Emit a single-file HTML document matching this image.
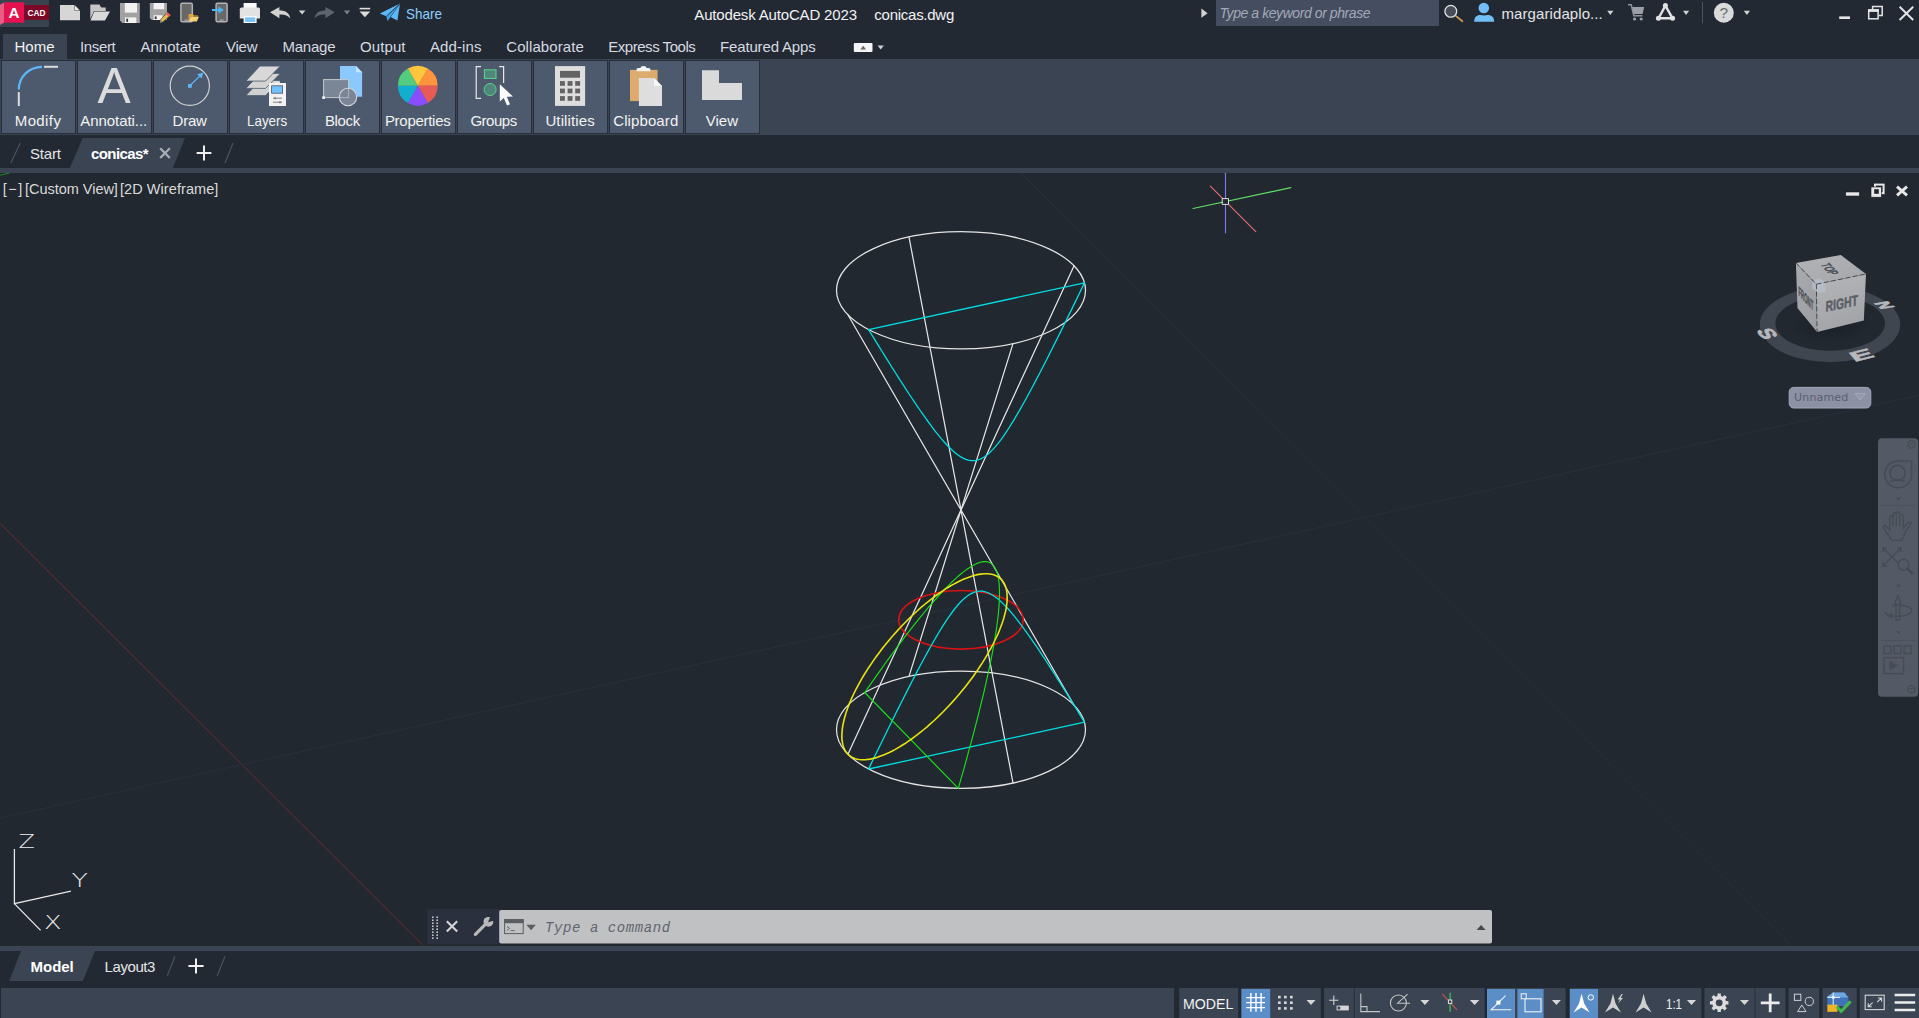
<!DOCTYPE html>
<html lang="en"><head><meta charset="utf-8"><title>Autodesk AutoCAD 2023 - conicas.dwg</title>
<style>
html,body{margin:0;padding:0;background:#222933;overflow:hidden}
body{width:1919px;height:1018px;position:relative;font-family:'Liberation Sans',sans-serif;}
.a{position:absolute}
.t{position:absolute;white-space:pre;line-height:1;}
svg{position:absolute;left:0;top:0;overflow:visible}
</style></head>
<body>
<div class="a" style="left:0px;top:0px;width:1919px;height:59px;background:#222933;"></div>
<div class="a" style="left:0px;top:0px;width:49px;height:27px;background:#394350;"></div>
<div class="a" style="left:3px;top:34px;width:64px;height:25px;background:#3b4453;"></div>
<div class="a" style="left:0px;top:59px;width:1919px;height:76px;background:#3b4453;"></div>
<div class="a" style="left:1px;top:60px;width:75px;height:74px;background:#272e3a;"></div>
<div class="a" style="left:2px;top:61px;width:73px;height:72px;background:#4d5a6e;"></div>
<div class="a" style="left:77px;top:60px;width:75px;height:74px;background:#272e3a;"></div>
<div class="a" style="left:78px;top:61px;width:73px;height:72px;background:#4d5a6e;"></div>
<div class="a" style="left:153px;top:60px;width:75px;height:74px;background:#272e3a;"></div>
<div class="a" style="left:154px;top:61px;width:73px;height:72px;background:#4d5a6e;"></div>
<div class="a" style="left:229px;top:60px;width:75px;height:74px;background:#272e3a;"></div>
<div class="a" style="left:230px;top:61px;width:73px;height:72px;background:#4d5a6e;"></div>
<div class="a" style="left:305px;top:60px;width:75px;height:74px;background:#272e3a;"></div>
<div class="a" style="left:306px;top:61px;width:73px;height:72px;background:#4d5a6e;"></div>
<div class="a" style="left:381px;top:60px;width:75px;height:74px;background:#272e3a;"></div>
<div class="a" style="left:382px;top:61px;width:73px;height:72px;background:#4d5a6e;"></div>
<div class="a" style="left:457px;top:60px;width:75px;height:74px;background:#272e3a;"></div>
<div class="a" style="left:458px;top:61px;width:73px;height:72px;background:#4d5a6e;"></div>
<div class="a" style="left:533px;top:60px;width:75px;height:74px;background:#272e3a;"></div>
<div class="a" style="left:534px;top:61px;width:73px;height:72px;background:#4d5a6e;"></div>
<div class="a" style="left:609px;top:60px;width:75px;height:74px;background:#272e3a;"></div>
<div class="a" style="left:610px;top:61px;width:73px;height:72px;background:#4d5a6e;"></div>
<div class="a" style="left:685px;top:60px;width:75px;height:74px;background:#272e3a;"></div>
<div class="a" style="left:686px;top:61px;width:73px;height:72px;background:#4d5a6e;"></div>
<div class="a" style="left:0px;top:135px;width:1919px;height:33px;background:#222933;"></div>
<div class="a" style="left:0px;top:168px;width:1919px;height:5px;background:#3b4453;"></div>
<div class="a" style="left:0px;top:173px;width:1919px;height:773px;background:#212830;"></div>
<div class="a" style="left:0px;top:946px;width:1919px;height:5px;background:#3b4453;"></div>
<div class="a" style="left:0px;top:951px;width:1919px;height:37px;background:#222933;"></div>
<div class="a" style="left:0px;top:988px;width:1919px;height:30px;background:#3b4453;"></div>
<div class="a" style="left:0px;top:988px;width:1px;height:30px;background:#222933;"></div>
<div class="a" style="left:1216px;top:0px;width:223px;height:26px;background:#454d60;"></div>
<svg width="1919" height="60" viewBox="0 0 1919 60">
<!-- app logo -->
<polygon points="0,4.8 4.2,2.4 4.2,22.6 0,25" fill="#ea5b86"/>
<rect x="4.2" y="2.3" width="20" height="20.4" fill="#e5124f"/>
<rect x="24.2" y="5" width="24.8" height="14.8" fill="#7c0826"/>
<text x="8.6" y="18" font-family="'Liberation Sans',sans-serif" font-weight="700" font-size="15.4" fill="#fff" textLength="11" lengthAdjust="spacingAndGlyphs">A</text>
<text x="27.5" y="15.8" font-family="'Liberation Sans',sans-serif" font-weight="700" font-size="9.2" fill="#fff" textLength="18" lengthAdjust="spacingAndGlyphs">CAD</text>
<!-- new -->
<path d="M60,5 H74.6 L80,10.4 V20.2 H60Z" fill="#d6d6d6"/>
<path d="M74.6,5 L80,10.4 H74.6Z" fill="#f6f6f6" stroke="#222933" stroke-width=".5"/>
<!-- open -->
<path d="M90.3,4.5 H99.4 L101.2,7.4 H105.7 V11 H94 L90.3,19Z" fill="#c6c6c6"/>
<path d="M94.3,11.6 H110 L105,20.6 H90.4Z" fill="#dadada"/>
<!-- save -->
<path d="M120,3 H139.8 V23 H122.4 L120,20.6Z" fill="#a2a2a2"/>
<rect x="124.8" y="3" width="12.2" height="9.6" fill="#f2f2f2"/>
<rect x="125" y="17.4" width="11.3" height="5.6" fill="#f2f2f2"/>
<rect x="126.3" y="18.7" width="1.8" height="3.2" fill="#30343c"/>
<!-- save as -->
<path d="M149.8,3 H167 V20 H151.8 L149.8,18Z" fill="#a2a2a2"/>
<rect x="153.6" y="3" width="10.6" height="6.2" fill="#f2f2f2"/>
<rect x="153.6" y="15.2" width="9" height="4.8" fill="#f2f2f2"/>
<rect x="154.8" y="16.4" width="1.8" height="2.6" fill="#30343c"/>
<path d="M167.5,12.2 L170.6,15.2 L163,22 L160,22.8 L160.6,19.6Z" fill="#e8b84e" stroke="#222933" stroke-width=".6"/>
<path d="M167.5,12.2 L170.6,15.2 L169,16.8 L165.8,13.8Z" fill="#ec5a62"/>
<path d="M160,22.8 L160.6,19.6 L163,22Z" fill="#8a8a8a"/>
<!-- mobile open -->
<rect x="180.9" y="3.2" width="11.4" height="18.6" rx="1.4" fill="#686868" stroke="#b2b2b2" stroke-width="1.5"/>
<rect x="184.6" y="19.6" width="4" height="1" fill="#b4b4b4"/>
<path d="M188.6,14 H193 L194,15.4 H198 V16.6 H190.6 L188.6,21.5Z" fill="#e0aa36"/>
<path d="M190.8,16.8 H199 L196.8,21.6 H188.6Z" fill="#f6d172"/>
<!-- mobile save -->
<rect x="216.1" y="3.2" width="11" height="18.6" rx="1.4" fill="#686868" stroke="#b2b2b2" stroke-width="1.5"/>
<rect x="219.6" y="19.6" width="4" height="1" fill="#b4b4b4"/>
<path d="M211.9,8.9 H218.4 V6.2 L223.9,10 L218.4,13.8 V11.1 H211.9Z" fill="#4db4f5"/>
<!-- print -->
<rect x="243.6" y="3" width="13" height="6" fill="#fafafa"/>
<path d="M241.5,7.6 H258.5 Q260,7.6 260,9.2 V18.6 H239.8 V9.2 Q239.8,7.6 241.5,7.6Z" fill="#e2e2e2"/>
<rect x="243.6" y="16.2" width="13" height="6.8" fill="#fafafa"/>
<rect x="245" y="17.4" width="10.2" height="4.6" fill="#79c4fa"/>
<!-- undo -->
<path d="M270,12.2 L279.4,7 V10.4 C285.6,10.4 289.8,13 290.2,18.6 C288,15.4 284.8,14.4 279.4,14.6 V18.2Z" fill="#d2d2d2"/>
<path d="M298.8,10.4 H305.4 L302.1,14.6Z" fill="#d2d2d2"/>
<!-- redo -->
<path d="M334.8,12.2 L325.4,7 V10.4 C319.2,10.4 315,13 314.6,18.6 C316.8,15.4 320,14.4 325.4,14.6 V18.2Z" fill="#5e646f"/>
<path d="M343.8,10.4 H350.2 L347,14.6Z" fill="#7b808a"/>
<!-- customize -->
<rect x="359.6" y="7.8" width="10.6" height="1.6" fill="#dcdcdc"/>
<path d="M359.6,11.4 H370.2 L364.9,17.2Z" fill="#dcdcdc"/>
<!-- share plane -->
<path d="M379.8,13.4 L400,3.6 L397.4,20.6 L390.4,17 L387.6,20.8 L386.4,16.2Z" fill="#5bb9f7"/>
<path d="M400,3.6 L386.4,16.2 L387.6,20.8 L389.4,16.6Z" fill="#3f98dc"/>
<path d="M400,3.6 L386.4,16.2" stroke="#222933" stroke-width=".8"/>
<path d="M400,3.6 L390.4,17" stroke="#222933" stroke-width=".6"/>
<!-- collapse ribbon button -->
<rect x="853.8" y="43" width="18.7" height="9" rx="1" fill="#f4f4f4"/>
<path d="M860.4,49.4 H866 L863.2,45.8Z" fill="#666"/>
<path d="M877.6,45.6 H883.8 L880.7,49.6Z" fill="#d2d2d2"/>
<!-- right: search arrow -->
<path d="M1201.4,8.6 L1207.6,13.2 L1201.4,17.8Z" fill="#d2d2d2"/>
<!-- magnifier -->
<line x1="1456.2" y1="16.2" x2="1462.4" y2="21.2" stroke="#c8965a" stroke-width="1.8" stroke-linecap="round"/>
<circle cx="1450.8" cy="11.3" r="5.9" fill="#474d59" stroke="#e2e2e2" stroke-width="1.3"/>
<!-- user -->
<circle cx="1483.8" cy="8" r="5.3" fill="#72bef7"/>
<path d="M1474.2,21.8 C1474.2,16 1478,14 1484,15.6 C1490,14 1494.2,16 1494.2,21.8Z" fill="#72bef7"/>
<path d="M1607.2,10.8 H1613.4 L1610.3,15Z" fill="#d2d2d2"/>
<!-- cart -->
<path d="M1628,4.8 H1631.2 L1633.8,15.8 H1642.4" fill="none" stroke="#8e939c" stroke-width="1.5"/>
<path d="M1632,7 H1644.2 L1642.6,14 H1633.6Z" fill="#9a9fa8"/>
<circle cx="1634.6" cy="19" r="1.6" fill="#9a9fa8"/><circle cx="1641.2" cy="19" r="1.6" fill="#9a9fa8"/>
<!-- autodesk app -->
<path d="M1665.4,5.6 L1658.6,18.2 H1672.4Z" fill="none" stroke="#e2e2e2" stroke-width="2.4" stroke-linejoin="round"/>
<circle cx="1665.4" cy="5.4" r="2.5" fill="#e2e2e2"/><circle cx="1658.4" cy="18.3" r="2.5" fill="#e2e2e2"/><circle cx="1672.6" cy="18.3" r="2.5" fill="#e2e2e2"/>
<path d="M1683,10.8 H1689.2 L1686.1,15Z" fill="#d2d2d2"/>
<rect x="1702" y="2" width="1" height="21.4" fill="#4b5262"/>
<!-- help -->
<circle cx="1723.8" cy="12.8" r="10" fill="#dadada"/>
<text x="1719.6" y="18.4" font-family="'Liberation Sans',sans-serif" font-size="15.5" fill="#6a6a6a">?</text>
<path d="M1743.8,10.8 H1750 L1746.9,15Z" fill="#d2d2d2"/>
<!-- window controls -->
<rect x="1839.2" y="16.4" width="10.8" height="2.6" fill="#e6e6e6"/>
<path d="M1872.6,9.4 V6.4 H1882.2 V15.4 H1878.6" fill="none" stroke="#e6e6e6" stroke-width="1.5"/>
<rect x="1868.7" y="10" width="9.4" height="8.8" fill="none" stroke="#e6e6e6" stroke-width="1.5"/>
<rect x="1868" y="9.3" width="10.8" height="2.6" fill="#e6e6e6"/>
<path d="M1899.6,6.8 L1913.2,20 M1913.2,6.8 L1899.6,20" stroke="#e6e6e6" stroke-width="1.9"/>
</svg>

<svg width="1919" height="140" viewBox="0 0 1919 140">
<path d="M18.8,89.4 A23.2,22.8 0 0 1 42,66.8" fill="none" stroke="#5cb6f7" stroke-width="2.2"/>
<rect x="44" y="65.8" width="14" height="2" fill="#dcdcdc"/>
<rect x="17.8" y="92" width="2" height="14" fill="#dcdcdc"/>
<text x="97.6" y="103.3" font-family="'Liberation Sans',sans-serif" font-size="49.8" fill="#dcdcdc" textLength="33.2" lengthAdjust="spacingAndGlyphs">A</text>
<circle cx="189.8" cy="85.8" r="19.6" fill="none" stroke="#cfcfcf" stroke-width="1.2"/>
<rect x="188" y="84" width="3.8" height="3.8" fill="#5cb6f7"/>
<line x1="190.4" y1="85.2" x2="200.4" y2="75.4" stroke="#5cb6f7" stroke-width="1.25"/>
<path d="M203.4,72.4 L197.2,74.2 L201.6,78.6Z" fill="#5cb6f7"/>
<path d="M259.9,80.6 H280.3 L265.6,95.6 H245.9Z" fill="#d0d0d0" stroke="#4c596d" stroke-width=".8"/>
<path d="M259.9,73.4 H280.3 L265.6,88.4 H245.9Z" fill="#d4d4d4" stroke="#4c596d" stroke-width=".8"/>
<path d="M259.9,66.1 H280.3 L265.6,81.1 H245.9Z" fill="#d8d8d8" stroke="#4c596d" stroke-width=".8"/>
<rect x="274" y="81.4" width="6" height="2.4" fill="#e4e4e4"/>
<rect x="269" y="83" width="17" height="23" fill="#f2f2f2"/>
<rect x="271.6" y="85.8" width="11" height="7.4" fill="#70c2ff" stroke="#4c5566" stroke-width=".8"/>
<path d="M273,98.2 H282 M273,102.2 H282" stroke="#60646c" stroke-width=".8"/>
<path d="M275,97 V99.4 M280,101 V103.4" stroke="#60646c" stroke-width="1"/>
<path d="M340,66.1 H356 L362.1,72.2 V96.8 H340Z" fill="#8bc9fd"/>
<path d="M356,66.1 L362.1,72.2 H356Z" fill="#c4e4ff"/>
<rect x="323.6" y="79.6" width="25" height="18" fill="#7a8596" stroke="#c4c8cf" stroke-width="1"/>
<circle cx="348" cy="97" r="8.7" fill="#7a8596" stroke="#d4d7dc" stroke-width="1.1"/>
<path d="M348.6,88.4 V97.6 H339.4" fill="none" stroke="#c4c8cf" stroke-width="1" opacity=".7"/>
<rect x="322.2" y="96.2" width="2.8" height="2.8" fill="#e8e8e8"/>
<path d="M417.8,85.8 L427.75,68.57 A19.9,19.9 0 0 1 437.70,85.80Z" fill="#ff943d"/>
<path d="M417.8,85.8 L437.70,85.80 A19.9,19.9 0 0 1 427.75,103.03Z" fill="#e85a56"/>
<path d="M417.8,85.8 L427.75,103.03 A19.9,19.9 0 0 1 407.85,103.03Z" fill="#8a4dff"/>
<path d="M417.8,85.8 L407.85,103.03 A19.9,19.9 0 0 1 397.90,85.80Z" fill="#12aed0"/>
<path d="M417.8,85.8 L397.90,85.80 A19.9,19.9 0 0 1 407.85,68.57Z" fill="#52cc7e"/>
<path d="M417.8,85.8 L407.85,68.57 A19.9,19.9 0 0 1 427.75,68.57Z" fill="#ffc53d"/>
<path d="M481,66.6 H476.2 V98.4 H481" fill="none" stroke="#e8e8e8" stroke-width="1.2"/>
<path d="M499.2,66.6 H503.6 V83" fill="none" stroke="#e8e8e8" stroke-width="1.2"/>
<rect x="484.4" y="69.8" width="11.6" height="8.6" fill="#4f877a" stroke="#60d68c" stroke-width="1"/>
<circle cx="490.1" cy="89.5" r="6" fill="#4f877a" stroke="#60d68c" stroke-width="1"/>
<path d="M499.8,84.2 V101.6 L503.8,98 L507,105.6 L510,104.2 L506.8,96.8 L513,96.6Z" fill="#fafafa"/>
<rect x="555" y="66.1" width="30.1" height="39.8" fill="#dedede"/>
<rect x="560" y="70.9" width="20" height="6.8" fill="#636363"/>
<rect x="560.0" y="81.1" width="4.9" height="4.7" fill="#636363"/>
<rect x="567.6" y="81.1" width="4.9" height="4.7" fill="#636363"/>
<rect x="575.2" y="81.1" width="4.9" height="4.7" fill="#636363"/>
<rect x="560.0" y="88.6" width="4.9" height="4.7" fill="#636363"/>
<rect x="567.6" y="88.6" width="4.9" height="4.7" fill="#636363"/>
<rect x="575.2" y="88.6" width="4.9" height="4.7" fill="#636363"/>
<rect x="560.0" y="96.1" width="4.9" height="4.7" fill="#636363"/>
<rect x="567.6" y="96.1" width="4.9" height="4.7" fill="#636363"/>
<rect x="575.2" y="96.1" width="4.9" height="4.7" fill="#636363"/>
<rect x="630" y="69.9" width="27.6" height="31.2" fill="#ddab6d"/>
<path d="M636.6,71.2 H650.4 V69 Q650.4,68 648,68 H646.6 Q646.4,66.1 643.5,66.1 Q640.6,66.1 640.4,68 H639 Q636.6,68 636.6,69Z" fill="#f4f4f4"/>
<path d="M638.9,78 H654 L662,86 V105.9 H638.9Z" fill="#dedede"/>
<path d="M654,78 L662,86 H654Z" fill="#f6f6f6"/>
<path d="M702,70.2 H719 V83 H742 V100 H702Z" fill="#dadada"/>
</svg>
<svg width="1919" height="1018" viewBox="0 0 1919 1018" fill="none" stroke-linecap="round" stroke-linejoin="round">
<g stroke-width="1">
<line x1="0" y1="523.3" x2="423" y2="945.2" stroke="#6e2a2c"/>
<line x1="0" y1="818" x2="1919" y2="395.3" stroke="#27303b"/>
<line x1="1021" y1="173" x2="1792" y2="946" stroke="#27303b"/>
<line x1="0" y1="175.2" x2="9" y2="173.2" stroke="#1f8a2a"/>
</g>
<g stroke="#e4e4e4" stroke-width="1.25">
<ellipse cx="961.0" cy="290.3" rx="124.5" ry="58.6"/>
<ellipse cx="961.0" cy="729.7" rx="124.5" ry="58.6"/>
<line x1="1013.0" y1="343.6" x2="909.0" y2="676.4"/>
<line x1="1074.1" y1="265.8" x2="847.9" y2="754.2"/>
<line x1="909.0" y1="237.1" x2="1013.0" y2="782.9"/>
<line x1="847.9" y1="314.8" x2="1074.1" y2="705.2"/>
</g>
<ellipse cx="961.0" cy="619.8" rx="62.2" ry="29.3" stroke="#d81212" stroke-width="1.6"/>
<path d="M868.6,329.6 L871.3,334.0 L874.0,338.4 L876.7,342.8 L879.4,347.2 L882.1,351.5 L884.8,355.9 L887.5,360.2 L890.2,364.5 L892.9,368.8 L895.6,373.0 L898.3,377.3 L901.0,381.5 L903.7,385.7 L906.4,389.8 L909.1,394.0 L911.8,398.0 L914.5,402.1 L917.2,406.1 L919.9,410.0 L922.6,413.9 L925.3,417.7 L928.0,421.5 L930.7,425.2 L933.4,428.8 L936.1,432.3 L938.8,435.6 L941.5,438.9 L944.2,442.0 L946.9,445.0 L949.6,447.7 L952.3,450.3 L955.0,452.7 L957.7,454.8 L960.4,456.6 L963.1,458.1 L965.8,459.3 L968.4,460.2 L971.1,460.6 L973.8,460.6 L976.5,460.3 L979.2,459.5 L981.9,458.3 L984.6,456.7 L987.3,454.7 L990.0,452.3 L992.7,449.6 L995.4,446.6 L998.1,443.3 L1000.8,439.8 L1003.5,436.1 L1006.2,432.1 L1008.9,428.0 L1011.6,423.7 L1014.3,419.3 L1017.0,414.7 L1019.7,410.1 L1022.4,405.3 L1025.1,400.5 L1027.8,395.5 L1030.5,390.5 L1033.2,385.5 L1035.9,380.4 L1038.6,375.2 L1041.3,370.0 L1044.0,364.7 L1046.7,359.5 L1049.4,354.1 L1052.1,348.8 L1054.8,343.4 L1057.5,338.0 L1060.2,332.6 L1062.9,327.1 L1065.6,321.6 L1068.3,316.1 L1071.0,310.6 L1073.7,305.1 L1076.4,299.6 L1079.1,294.0 L1081.8,288.4 L1084.5,282.8Z" stroke="#00dfe4" stroke-width="1.3"/>
<path d="M868.6,769.0 L871.3,763.4 L874.0,757.8 L876.7,752.3 L879.4,746.7 L882.1,741.2 L884.8,735.7 L887.5,730.2 L890.2,724.7 L892.9,719.3 L895.6,713.8 L898.3,708.4 L901.0,703.0 L903.7,697.7 L906.4,692.4 L909.1,687.1 L911.8,681.8 L914.5,676.6 L917.2,671.4 L919.9,666.3 L922.6,661.3 L925.3,656.3 L928.0,651.4 L930.7,646.5 L933.4,641.8 L936.1,637.1 L938.8,632.5 L941.5,628.1 L944.2,623.8 L946.9,619.7 L949.6,615.8 L952.3,612.0 L955.0,608.5 L957.7,605.2 L960.4,602.2 L963.1,599.5 L965.8,597.2 L968.4,595.2 L971.1,593.6 L973.8,592.3 L976.5,591.6 L979.2,591.2 L981.9,591.2 L984.6,591.7 L987.3,592.5 L990.0,593.7 L992.7,595.2 L995.4,597.0 L998.1,599.1 L1000.8,601.5 L1003.5,604.1 L1006.2,606.8 L1008.9,609.8 L1011.6,612.9 L1014.3,616.2 L1017.0,619.6 L1019.7,623.1 L1022.4,626.6 L1025.1,630.3 L1027.8,634.1 L1030.5,637.9 L1033.2,641.8 L1035.9,645.7 L1038.6,649.7 L1041.3,653.8 L1044.0,657.9 L1046.7,662.0 L1049.4,666.1 L1052.1,670.3 L1054.8,674.5 L1057.5,678.8 L1060.2,683.0 L1062.9,687.3 L1065.6,691.6 L1068.3,696.0 L1071.0,700.3 L1073.7,704.7 L1076.4,709.0 L1079.1,713.4 L1081.8,717.8 L1084.5,722.2Z" stroke="#00dfe4" stroke-width="1.3"/>
<path d="M864.7,692.5 L869.9,685.1 L875.0,677.8 L880.0,670.8 L884.8,664.0 L889.6,657.4 L894.3,651.0 L898.9,644.9 L903.3,638.9 L907.7,633.2 L912.0,627.7 L916.1,622.4 L920.2,617.4 L924.2,612.5 L928.0,607.9 L931.8,603.5 L935.5,599.3 L939.0,595.4 L942.5,591.6 L945.8,588.1 L949.1,584.8 L952.2,581.7 L955.3,578.9 L958.2,576.2 L961.1,573.8 L963.8,571.6 L966.5,569.6 L969.0,567.9 L971.4,566.3 L973.8,565.0 L976.0,563.9 L978.2,563.0 L980.2,562.3 L982.1,561.9 L984.0,561.6 L985.7,561.6 L987.3,561.8 L988.8,562.3 L990.3,562.9 L991.6,563.8 L992.8,564.9 L993.9,566.2 L994.9,567.7 L995.8,569.5 L996.7,571.4 L997.4,573.6 L998.0,576.0 L998.5,578.6 L998.9,581.5 L999.2,584.5 L999.4,587.8 L999.5,591.3 L999.5,595.0 L999.4,599.0 L999.2,603.1 L998.9,607.5 L998.5,612.1 L998.0,616.9 L997.4,622.0 L996.7,627.2 L995.9,632.7 L994.9,638.4 L993.9,644.3 L992.8,650.4 L991.6,656.8 L990.3,663.4 L988.8,670.2 L987.3,677.2 L985.7,684.4 L984.0,691.8 L982.1,699.5 L980.2,707.4 L978.2,715.5 L976.0,723.8 L973.8,732.4 L971.5,741.2 L969.0,750.1 L966.5,759.3 L963.9,768.8 L961.1,778.4 L958.3,788.3Z" stroke="#19e019" stroke-width="1.15"/>
<path d="M1001.2,579.3 L1002.3,580.6 L1003.4,582.1 L1004.3,583.6 L1005.1,585.3 L1005.7,587.2 L1006.3,589.1 L1006.7,591.2 L1007.0,593.4 L1007.1,595.7 L1007.2,598.1 L1007.1,600.6 L1006.9,603.2 L1006.5,606.0 L1006.1,608.8 L1005.5,611.7 L1004.7,614.6 L1003.9,617.7 L1002.9,620.9 L1001.8,624.1 L1000.6,627.3 L999.3,630.7 L997.9,634.1 L996.3,637.5 L994.6,641.0 L992.9,644.5 L991.0,648.1 L989.0,651.7 L986.9,655.3 L984.8,658.9 L982.5,662.6 L980.1,666.2 L977.7,669.9 L975.2,673.5 L972.6,677.2 L969.9,680.8 L967.1,684.4 L964.3,688.0 L961.4,691.5 L958.5,695.0 L955.5,698.5 L952.5,701.9 L949.4,705.2 L946.3,708.5 L943.2,711.8 L940.0,714.9 L936.8,718.0 L933.6,721.0 L930.3,723.9 L927.1,726.8 L923.8,729.5 L920.6,732.2 L917.4,734.7 L914.1,737.1 L910.9,739.5 L907.7,741.7 L904.6,743.8 L901.4,745.8 L898.3,747.6 L895.3,749.4 L892.3,751.0 L889.3,752.5 L886.4,753.8 L883.5,755.0 L880.7,756.1 L878.0,757.1 L875.4,757.9 L872.8,758.5 L870.3,759.1 L867.9,759.4 L865.6,759.7 L863.4,759.8 L861.2,759.7 L859.2,759.5 L857.2,759.2 L855.4,758.7 L853.7,758.1 L852.1,757.3 L850.6,756.4 L849.2,755.4 L847.9,754.2 L846.7,752.9 L845.7,751.4 L844.8,749.8 L844.0,748.1 L843.3,746.3 L842.8,744.4 L842.4,742.3 L842.1,740.1 L841.9,737.8 L841.9,735.4 L842.0,732.9 L842.2,730.2 L842.5,727.5 L843.0,724.7 L843.6,721.8 L844.3,718.8 L845.2,715.8 L846.1,712.6 L847.2,709.4 L848.4,706.1 L849.7,702.8 L851.2,699.4 L852.7,696.0 L854.4,692.5 L856.2,688.9 L858.1,685.4 L860.0,681.8 L862.1,678.2 L864.3,674.5 L866.6,670.9 L868.9,667.2 L871.4,663.6 L873.9,659.9 L876.5,656.3 L879.2,652.7 L881.9,649.1 L884.7,645.5 L887.6,642.0 L890.5,638.5 L893.5,635.0 L896.6,631.6 L899.6,628.3 L902.7,625.0 L905.9,621.7 L909.1,618.6 L912.3,615.5 L915.5,612.5 L918.7,609.5 L922.0,606.7 L925.2,604.0 L928.5,601.3 L931.7,598.8 L934.9,596.3 L938.1,594.0 L941.3,591.8 L944.5,589.7 L947.6,587.7 L950.7,585.8 L953.8,584.1 L956.8,582.5 L959.8,581.0 L962.7,579.6 L965.5,578.4 L968.3,577.4 L971.0,576.4 L973.7,575.6 L976.2,574.9 L978.7,574.4 L981.1,574.1 L983.5,573.8 L985.7,573.7 L987.8,573.8 L989.9,574.0 L991.8,574.3 L993.6,574.8 L995.4,575.4 L997.0,576.2 L998.5,577.1 L999.9,578.1Z" stroke="#e8e40e" stroke-width="1.6"/>
<g stroke-width="1.15">
<line x1="1193" y1="208.5" x2="1290.8" y2="187.6" stroke="#62de68"/>
<line x1="1225.5" y1="173.3" x2="1225.5" y2="232.7" stroke="#7a78ee"/>
<line x1="1210.3" y1="186.2" x2="1255.8" y2="231.6" stroke="#e86e6e"/>
<rect x="1222.6" y="198.6" width="5.9" height="5.8" fill="#212830" stroke="#f4f4f4" stroke-width=".9"/>
</g>
</svg>
<svg width="1919" height="1018" viewBox="0 0 1919 1018">
<polygon points="82.7,138 185,138 172.8,168 69.8,168" fill="#3b4453"/>
<path d="M10.8,163 L20.3,143 M225,163 L233,143" stroke="#4a5261" stroke-width="1.2"/>
<path d="M160.2,148.2 L169.8,158 M169.8,148.2 L160.2,158" stroke="#a8adb6" stroke-width="2.3"/>
<path d="M196.6,153.1 H211.4 M204,145.6 V160.6" stroke="#f0f0f0" stroke-width="2"/>
<polygon points="21,951 94.9,951 82.9,981 9.2,981" fill="#3b4453"/>
<path d="M167.3,975.9 L175,956.3 M217.2,975.9 L225,956.3" stroke="#4a5261" stroke-width="1.2"/>
<path d="M188.4,966.1 H203.6 M196,958.6 V973.6" stroke="#f0f0f0" stroke-width="2"/>
<rect x="1845.7" y="192" width="13.7" height="4" fill="#e8e8e8" stroke="#14181e" stroke-width=".6"/>
<rect x="1875" y="184.6" width="8.6" height="8.6" fill="none" stroke="#e8e8e8" stroke-width="2"/>
<rect x="1871" y="187" width="10.3" height="10.2" fill="#e8e8e8" stroke="#14181e" stroke-width=".6"/>
<rect x="1874.2" y="189.2" width="4.6" height="4.6" fill="#20262e"/>
<path d="M1897,186.6 L1907,195.4 M1907,186.6 L1897,195.4" stroke="#e8e8e8" stroke-width="2.9"/>
<path d="M14.4,849.1 V903.6 L70.9,891.2 M14.4,903.6 L40.6,930.4" fill="none" stroke="#e6e6e6" stroke-width="1.3"/>
<text x="18.6" y="847.8" font-family="'DejaVu Sans','Liberation Sans',sans-serif" font-weight="200" font-size="19" fill="#ececec" textLength="16.4" lengthAdjust="spacingAndGlyphs">Z</text>
<text x="71.6" y="887" font-family="'DejaVu Sans','Liberation Sans',sans-serif" font-weight="200" font-size="19" fill="#ececec" textLength="16.4" lengthAdjust="spacingAndGlyphs">Y</text>
<text x="43.9" y="929.2" font-family="'DejaVu Sans','Liberation Sans',sans-serif" font-weight="200" font-size="19" fill="#ececec" textLength="17.6" lengthAdjust="spacingAndGlyphs">X</text>
<rect x="427" y="909" width="73" height="35.5" rx="2" fill="#2a303d"/>
<rect x="499.2" y="910" width="992.8" height="33.6" rx="2" fill="#c0c1c3"/>
<rect x="432" y="916.4" width="1.6" height="1.6" fill="#c4c4c4"/><rect x="436.4" y="916.4" width="1.6" height="1.6" fill="#c4c4c4"/>
<rect x="432" y="919.4" width="1.6" height="1.6" fill="#c4c4c4"/><rect x="436.4" y="919.4" width="1.6" height="1.6" fill="#c4c4c4"/>
<rect x="432" y="922.4" width="1.6" height="1.6" fill="#c4c4c4"/><rect x="436.4" y="922.4" width="1.6" height="1.6" fill="#c4c4c4"/>
<rect x="432" y="925.4" width="1.6" height="1.6" fill="#c4c4c4"/><rect x="436.4" y="925.4" width="1.6" height="1.6" fill="#c4c4c4"/>
<rect x="432" y="928.4" width="1.6" height="1.6" fill="#c4c4c4"/><rect x="436.4" y="928.4" width="1.6" height="1.6" fill="#c4c4c4"/>
<rect x="432" y="931.4" width="1.6" height="1.6" fill="#c4c4c4"/><rect x="436.4" y="931.4" width="1.6" height="1.6" fill="#c4c4c4"/>
<rect x="432" y="934.4" width="1.6" height="1.6" fill="#c4c4c4"/><rect x="436.4" y="934.4" width="1.6" height="1.6" fill="#c4c4c4"/>
<rect x="432" y="937.4" width="1.6" height="1.6" fill="#c4c4c4"/><rect x="436.4" y="937.4" width="1.6" height="1.6" fill="#c4c4c4"/>
<path d="M446.8,921.2 L457.2,931.4 M457.2,921.2 L446.8,931.4" stroke="#d4d4d4" stroke-width="2.1"/>
<path d="M475.4,934.4 L486.6,923.2" stroke="#b9b9b9" stroke-width="3.2" stroke-linecap="round"/>
<circle cx="488.4" cy="921.8" r="4.9" fill="#b9b9b9"/>
<path d="M488,922.2 L490.2,917 L494.6,916.4 L493.6,920.8Z" fill="#2a303d"/>
<rect x="504.6" y="919.6" width="18.6" height="14" fill="#c0c1c3" stroke="#5a5d63" stroke-width="1"/>
<rect x="504.2" y="919.2" width="19.4" height="4" fill="#5a5d63"/>
<path d="M507,926.4 L509.6,928.4 L507,930.4 M510.6,930.6 H514.6" fill="none" stroke="#5a5d63" stroke-width=".9"/>
<path d="M526.4,924.8 H535.8 L531.1,930.2Z" fill="#5a5d63"/>
<path d="M1476.6,930 H1485.6 L1481.1,925Z" fill="#45484e"/>
<rect x="1878" y="438.2" width="40.2" height="258.6" rx="4" fill="#545a65"/>
<g fill="none" stroke="#464b55" stroke-width="1.4">
<circle cx="1911.6" cy="444.4" r="3.6"/><path d="M1909.6,442.4 L1913.6,446.4 M1913.6,442.4 L1909.6,446.4" stroke-width="1"/>
<circle cx="1911.4" cy="689.2" r="3.6"/><path d="M1909.4,688.6 H1913.4" stroke-width="1"/>
<path d="M1911.6,461 H1897.4 A13.4,13.4 0 1 0 1911.6,474Z" stroke-width="1.6"/>
<circle cx="1897.6" cy="473" r="7.6" stroke-width="1.6"/>
<path d="M1890.4,481.6 Q1897.6,477.4 1904.8,481.6" />
<path d="M1896,497.6 H1901 L1898.5,500.4Z" fill="#464b55" stroke="none"/>
<path d="M1880,505.4 H1916" stroke="#4c525c" stroke-width="1"/>
<path d="M1889.8,537.4 C1886.6,533 1884.4,529.4 1883.4,527.4 C1882.8,525.6 1885,524.8 1886.4,526.4 L1889.8,530 V517.4 C1889.8,515 1892.8,515 1893,517.4 V526 V514.4 C1893.2,512 1896.2,512 1896.4,514.4 V526 V513.6 C1896.6,511.4 1899.6,511.4 1899.8,513.6 V526 V516 C1900,513.8 1903,513.8 1903.2,516 V528 C1906,524.4 1909.6,521.4 1911.2,522.6 C1911.6,523.4 1907,528 1905,533 C1904,536 1902,539.4 1901,540.4 H1891.6Z" stroke-width="1.4"/>
<path d="M1883,548 L1901,566 M1901,548 L1883,566" stroke-width="1.4"/>
<path d="M1883,552 V548 H1887 M1897,548 H1901 V552 M1883,562 V566 H1887" stroke-width="1.6"/>
<circle cx="1903.6" cy="564.6" r="5.4" fill="#545a65"/>
<path d="M1907.4,568.6 L1912.6,574" stroke-width="2.6"/>
<path d="M1896,584.8 H1901 L1898.5,587.6Z" fill="#464b55" stroke="none"/>
<path d="M1894.6,603.6 L1897.8,595.6 L1901,603.6 H1899.6 V620 H1896 V603.6Z" stroke-width="1.3"/>
<ellipse cx="1897.8" cy="610.6" rx="14" ry="5.6" stroke-width="1.4" stroke-dasharray="30 12 40 0"/>
<path d="M1892.4,612.8 L1886.6,615.6 L1892.6,618.6Z" fill="#464b55" stroke="none"/>
<path d="M1896,631.2 H1901 L1898.5,634Z" fill="#464b55" stroke="none"/>
<path d="M1880,640.4 H1916" stroke="#4c525c" stroke-width="1"/>
<rect x="1884" y="646" width="7" height="7.6"/><rect x="1894" y="646" width="7" height="7.6"/><rect x="1904" y="646" width="7" height="7.6"/>
<rect x="1884" y="657.6" width="19.6" height="16"/>
<path d="M1889.4,661 L1898.6,665.6 L1889.4,670.2Z" fill="#464b55" stroke="none"/>
</g>
<defs>
<linearGradient id="gT" x1="0" y1="0" x2="1" y2="1"><stop offset="0" stop-color="#b2b4b7"/><stop offset="1" stop-color="#a4a6aa"/></linearGradient>
<linearGradient id="gR" x1="0" y1="0" x2="0.3" y2="1"><stop offset="0" stop-color="#b4b6b9"/><stop offset="1" stop-color="#a2a4a8"/></linearGradient>
<linearGradient id="gF" x1="0" y1="0" x2="0.6" y2="1"><stop offset="0" stop-color="#a9abaf"/><stop offset="1" stop-color="#9d9fa3"/></linearGradient>
<radialGradient id="gS" cx="0.5" cy="0.5" r="0.5"><stop offset="0" stop-color="#1a1f26" stop-opacity=".9"/><stop offset="1" stop-color="#1a1f26" stop-opacity="0"/></radialGradient>
</defs>
<path fill-rule="evenodd" fill="#3f464f" d="M1759.8,324.6 a70.2,37.6 0 1 0 140.4,0 a70.2,37.6 0 1 0 -140.4,0Z M1775.4,323.4 a54.8,27.4 0 1 0 109.6,0 a54.8,27.4 0 1 0 -109.6,0Z"/>
<ellipse cx="1830" cy="326" rx="42" ry="16" fill="url(#gS)"/>
<polygon points="1795.9,263 1840.8,255 1866,274 1816.4,284.2" fill="url(#gT)"/>
<polygon points="1816.4,284.2 1866,274 1863.8,320.5 1817.1,332" fill="url(#gR)"/>
<polygon points="1795.9,263 1816.4,284.2 1817.1,332 1797.5,308.1" fill="url(#gF)"/>
<polygon points="1812.4,281.4 1819.2,278 1825.6,282.2 1825.6,291.4 1818.2,293 1812.4,288.4" fill="#b8c0cc" opacity=".75"/>
<path d="M1795.9,263 L1816.4,284.2 M1816.4,284.2 L1866,274 M1816.4,284.2 L1817.1,332" stroke="#33373d" stroke-width=".8" stroke-dasharray="5 2.4" fill="none"/>
<text transform="matrix(0.98,-0.2,-0.02,1,1825.6,311.8)" font-family="'Liberation Sans',sans-serif" font-weight="700" font-size="14.8" fill="#5a5e66" stroke="#5a5e66" stroke-width=".5" textLength="32.9" lengthAdjust="spacingAndGlyphs">RIGHT</text>
<text transform="matrix(0.429,0.444,0.015,1,1798.4,295.2)" font-family="'Liberation Sans',sans-serif" font-weight="700" font-size="13.5" fill="#4c5057" stroke="#4c5057" stroke-width=".5" textLength="35" lengthAdjust="spacingAndGlyphs">FRONT</text>
<text transform="matrix(0.429,0.444,-0.983,0.188,1819.9,264.6)" font-family="'Liberation Sans',sans-serif" font-weight="700" font-size="13.5" fill="#4c5057" stroke="#4c5057" stroke-width=".4" textLength="24" lengthAdjust="spacingAndGlyphs">TOP</text>
<text transform="matrix(0.564,0.613,-0.9085,0.209,1755.6,330.6)" font-family="'Liberation Sans',sans-serif" font-weight="700" font-size="23.4" fill="#b6b8bc" stroke="#b6b8bc" stroke-width=".9">S</text>
<text transform="matrix(1.272,-0.322,0.418,0.5,1854.5,362.1)" font-family="'Liberation Sans',sans-serif" font-weight="700" font-size="25" fill="#b6b8bc" stroke="#b6b8bc" stroke-width=".9">E</text>
<text transform="matrix(-0.564,-0.441,0.9085,-0.15,1895.4,307.6)" font-family="'Liberation Sans',sans-serif" font-weight="700" font-size="21.5" fill="#b6b8bc" stroke="#b6b8bc" stroke-width=".9">N</text>
<rect x="1789.2" y="387.4" width="81.6" height="20.6" rx="4.5" fill="#8c91a4" stroke="#a3a8ba" stroke-width="1"/>
<path d="M1855,393.6 H1865.6 L1860.3,399.8Z" fill="#9398aa" stroke="#a9aec0" stroke-width=".8"/>
</svg>
<svg width="1919" height="1018" viewBox="0 0 1919 1018">
<rect x="1174" y="988" width="5.2" height="30" fill="#222933"/>
<rect x="1238.2" y="988" width="3.2" height="30" fill="#222933"/>
<rect x="1320.8" y="988" width="3.2" height="30" fill="#222933"/>
<rect x="1484.6" y="988" width="2.4" height="30" fill="#222933"/>
<rect x="1565.6" y="988" width="4.2" height="30" fill="#222933"/>
<rect x="1701.4" y="988" width="3.0" height="30" fill="#222933"/>
<rect x="1785.5" y="988" width="3.0" height="30" fill="#222933"/>
<rect x="1819.2" y="988" width="3.4" height="30" fill="#222933"/>
<rect x="1856.8" y="988" width="3.0" height="30" fill="#222933"/>
<rect x="1353.8" y="988" width="1.2" height="30" fill="#2c3340"/>
<rect x="1754.4" y="988" width="1.2" height="30" fill="#2c3340"/>
<rect x="1241.4" y="989" width="28.8" height="29" fill="#5b8ec6"/>
<rect x="1487" y="989" width="28.0" height="29" fill="#5b8ec6"/>
<rect x="1517.4" y="989" width="26.2" height="29" fill="#5b8ec6"/>
<rect x="1569.8" y="989" width="28.2" height="29" fill="#5b8ec6"/>
<path d="M1250.9,993 V1011.8 M1256,993 V1011.8 M1261.1,993 V1011.8 M1246.2,997.6 H1265 M1246.2,1002.6 H1265 M1246.2,1007.6 H1265" stroke="#fff" stroke-width="1.4" fill="none"/>
<rect x="1278" y="995.8" width="2.7" height="2.6" fill="#d6d6d6"/>
<rect x="1278" y="1001.4" width="2.7" height="2.6" fill="#d6d6d6"/>
<rect x="1278" y="1007.1" width="2.7" height="2.6" fill="#d6d6d6"/>
<rect x="1284" y="995.8" width="2.7" height="2.6" fill="#d6d6d6"/>
<rect x="1284" y="1001.4" width="2.7" height="2.6" fill="#d6d6d6"/>
<rect x="1284" y="1007.1" width="2.7" height="2.6" fill="#d6d6d6"/>
<rect x="1290" y="995.8" width="2.7" height="2.6" fill="#d6d6d6"/>
<rect x="1290" y="1001.4" width="2.7" height="2.6" fill="#d6d6d6"/>
<rect x="1290" y="1007.1" width="2.7" height="2.6" fill="#d6d6d6"/>
<path d="M1306.5,1000.1 H1315.5 L1311.0,1005Z" fill="#d6d6d6"/>
<path d="M1333.8,995.6 V1005 M1329.2,1000.3 H1338.4" stroke="#d6d6d6" stroke-width="1.1"/>
<rect x="1336.6" y="1005.6" width="12.2" height="4.8" fill="#d6d6d6"/><rect x="1337.6" y="1006.6" width="2.6" height="2.8" fill="#3b4453"/>
<path d="M1360.8,993.4 V1011.6 H1380 M1360.8,1006.6 H1367 V1011.6" stroke="#c4c4c4" stroke-width="1.1" fill="none"/>
<circle cx="1398.4" cy="1003" r="8" fill="none" stroke="#c4c4c4" stroke-width="1.1"/>
<path d="M1407.6,994.2 L1397.6,1003.2 H1410" stroke="#c4c4c4" stroke-width="1.1" fill="none"/>
<path d="M1420.4,1000.1 H1429.4 L1424.9,1005Z" fill="#d6d6d6"/>
<path d="M1442.2,993.8 L1457,1009.8" stroke="#c85555" stroke-width="1.1"/>
<path d="M1450.1,992.8 V1011.8" stroke="#3fc45a" stroke-width="1.2"/>
<rect x="1448.4" y="1000" width="3.4" height="3.4" fill="#3b4453" stroke="#e8e8e8" stroke-width=".9"/>
<path d="M1469.9,1000.1 H1479.3 L1474.6,1005Z" fill="#d6d6d6"/>
<path d="M1511.2,1009.8 H1491.2 L1505.6,995.6" stroke="#f2f2f2" stroke-width="1.1" fill="none"/>
<rect x="1496.4" y="1000.6" width="4" height="4" fill="#fff"/>
<rect x="1525" y="998.8" width="16" height="13" fill="none" stroke="#f2f2f2" stroke-width="1.1"/>
<rect x="1521.2" y="993.8" width="5" height="5" fill="#5b8ec6" stroke="#f2f2f2" stroke-width="1"/>
<path d="M1551.9,1000.1 H1560.9 L1556.4,1005Z" fill="#d6d6d6"/>
<path d="M1581.6,993.8 L1584.1999999999998,1003.4 L1589.6,1012.6 L1581.6,1007.4 L1573.6,1012.6 L1579.0,1003.4Z" fill="#fff"/>
<circle cx="1590.8" cy="997.4" r="2.7" fill="none" stroke="#fff" stroke-width="1"/>
<path d="M1613,993.8 L1615.6,1003.4 L1621,1012.6 L1613,1007.4 L1605,1012.6 L1610.4,1003.4Z" fill="#cfcfcf"/>
<path d="M1621.6,994 L1617.6,999.6 H1620 L1618,1003.4 L1623,998 H1620.6 L1622.8,994Z" fill="#cfcfcf"/>
<path d="M1643.6,993.8 L1646.1999999999998,1003.4 L1651.6,1012.6 L1643.6,1007.4 L1635.6,1012.6 L1641.0,1003.4Z" fill="#cfcfcf"/>
<path d="M1686.9,1000.1 H1696.1 L1691.5,1005Z" fill="#d6d6d6"/>
<path fill-rule="evenodd" d="M1728.46,1001.21 L1728.46,1004.39 L1725.96,1004.60 L1725.26,1006.31 L1726.88,1008.23 L1724.63,1010.48 L1722.71,1008.86 L1721.00,1009.56 L1720.79,1012.06 L1717.61,1012.06 L1717.40,1009.56 L1715.69,1008.86 L1713.77,1010.48 L1711.52,1008.23 L1713.14,1006.31 L1712.44,1004.60 L1709.94,1004.39 L1709.94,1001.21 L1712.44,1001.00 L1713.14,999.29 L1711.52,997.37 L1713.77,995.12 L1715.69,996.74 L1717.40,996.04 L1717.61,993.54 L1720.79,993.54 L1721.00,996.04 L1722.71,996.74 L1724.63,995.12 L1726.88,997.37 L1725.26,999.29 L1725.96,1001.00Z M1722.6000000000001,1002.8 a3.4,3.4 0 1 0 -6.8,0 a3.4,3.4 0 1 0 6.8,0Z" fill="#dcdcdc"/>
<path d="M1740,1000.1 H1749 L1744.5,1005Z" fill="#d6d6d6"/>
<path d="M1760.8,1002.8 H1779.6 M1770.2,993.4 V1012.2" stroke="#ececec" stroke-width="2.8"/>
<rect x="1794.4" y="994.2" width="6.4" height="6.2" fill="none" stroke="#d0d0d0" stroke-width="1"/>
<circle cx="1809.3" cy="1001.4" r="4.1" fill="none" stroke="#d0d0d0" stroke-width="1"/>
<path d="M1801.8,1005 L1806,1011.6 H1797.6Z" fill="none" stroke="#d0d0d0" stroke-width="1"/>
<path d="M1827.4,996.6 L1833.2,992.6 H1844.4 L1848.4,997.6 V1006 H1827.4Z" fill="#3f72b8"/>
<path d="M1827.4,996.6 L1833.2,992.6 H1844.4 L1848.4,997.6 H1827.4Z" fill="#6ea6e0"/>
<path d="M1833.2,992.6 V1005 M1827.4,997.4 H1840" stroke="#eaf2fb" stroke-width="1"/>
<circle cx="1833.2" cy="997.4" r="1.6" fill="#eaf2fb"/>
<rect x="1827.4" y="1004.6" width="10" height="7.2" fill="#f0b429"/>
<path d="M1836.8,1006.8 L1841.2,1011.4 L1850.6,1001.4" fill="none" stroke="#3fb84f" stroke-width="3"/>
<rect x="1865.2" y="995.2" width="19" height="14.4" fill="none" stroke="#d6d6d6" stroke-width="1.1"/>
<path d="M1868.4,1006.6 L1872.6,1002.6 M1868.2,1003.2 V1006.8 H1871.8 M1881.4,998.2 L1877.2,1002.2 M1878,998 H1881.6 V1001.6" fill="none" stroke="#d6d6d6" stroke-width="1.1"/>
<path d="M1894.6,995.1 H1915.2 M1894.6,1002.6 H1915.2 M1894.6,1010 H1915.2" stroke="#ececec" stroke-width="2.5"/>
</svg>
<span class="t" style="left:694.30px;top:7.30px;font-size:15px;color:#f2f2f2;letter-spacing:-0.163px;">Autodesk AutoCAD 2023</span>
<span class="t" style="left:874.30px;top:7.30px;font-size:15px;color:#f2f2f2;letter-spacing:-0.255px;">conicas.dwg</span>
<span class="t" style="left:406.40px;top:6.30px;font-size:15px;color:#8ccfff;transform-origin:0 0;transform:scaleX(0.8993);">Share</span>
<span class="t" style="left:1219.50px;top:6.15px;font-size:14px;color:#a3a9b6;font-style:italic;letter-spacing:-0.427px;">Type a keyword or phrase</span>
<span class="t" style="left:1501.50px;top:6.30px;font-size:15px;color:#e4e4e4;letter-spacing:0.088px;">margaridaplo...</span>
<span class="t" style="left:14.50px;top:39.30px;font-size:15px;color:#f2f2f2;letter-spacing:-0.005px;">Home</span>
<span class="t" style="left:80.00px;top:39.30px;font-size:15px;color:#d6dae0;letter-spacing:-0.353px;">Insert</span>
<span class="t" style="left:140.50px;top:39.30px;font-size:15px;color:#d6dae0;letter-spacing:-0.009px;">Annotate</span>
<span class="t" style="left:226.00px;top:39.30px;font-size:15px;color:#d6dae0;letter-spacing:-0.250px;">View</span>
<span class="t" style="left:282.50px;top:39.30px;font-size:15px;color:#d6dae0;letter-spacing:-0.244px;">Manage</span>
<span class="t" style="left:360.00px;top:39.30px;font-size:15px;color:#d6dae0;letter-spacing:0.094px;">Output</span>
<span class="t" style="left:430.00px;top:39.30px;font-size:15px;color:#d6dae0;letter-spacing:0.107px;">Add-ins</span>
<span class="t" style="left:506.25px;top:39.30px;font-size:15px;color:#d6dae0;letter-spacing:0.078px;">Collaborate</span>
<span class="t" style="left:608.25px;top:39.30px;font-size:15px;color:#d6dae0;letter-spacing:-0.467px;">Express Tools</span>
<span class="t" style="left:720.00px;top:39.30px;font-size:15px;color:#d6dae0;letter-spacing:-0.152px;">Featured Apps</span>
<span class="t" style="left:14.75px;top:113.30px;font-size:15px;color:#f2f2f2;letter-spacing:0.392px;">Modify</span>
<span class="t" style="left:80.25px;top:113.30px;font-size:15px;color:#f2f2f2;letter-spacing:-0.055px;">Annotati...</span>
<span class="t" style="left:172.50px;top:113.30px;font-size:15px;color:#f2f2f2;letter-spacing:-0.205px;">Draw</span>
<span class="t" style="left:246.75px;top:113.30px;font-size:15px;color:#f2f2f2;transform-origin:0 0;transform:scaleX(0.8938);">Layers</span>
<span class="t" style="left:324.90px;top:113.30px;font-size:15px;color:#f2f2f2;letter-spacing:-0.334px;">Block</span>
<span class="t" style="left:384.90px;top:113.30px;font-size:15px;color:#f2f2f2;letter-spacing:-0.281px;">Properties</span>
<span class="t" style="left:470.40px;top:113.30px;font-size:15px;color:#f2f2f2;letter-spacing:-0.471px;">Groups</span>
<span class="t" style="left:545.40px;top:113.30px;font-size:15px;color:#f2f2f2;letter-spacing:0.126px;">Utilities</span>
<span class="t" style="left:613.25px;top:113.30px;font-size:15px;color:#f2f2f2;letter-spacing:0.098px;">Clipboard</span>
<span class="t" style="left:705.80px;top:113.30px;font-size:15px;color:#f2f2f2;letter-spacing:-0.017px;">View</span>
<span class="t" style="left:30.00px;top:145.80px;font-size:15px;color:#e4e4e4;letter-spacing:-0.172px;">Start</span>
<span class="t" style="left:91.00px;top:145.80px;font-size:15px;color:#ffffff;font-weight:700;letter-spacing:-0.586px;">conicas*</span>
<span class="t" style="left:2.70px;top:181.73px;font-size:14.5px;color:#dadada;letter-spacing:1.484px;">[−]</span>
<span class="t" style="left:25.10px;top:181.73px;font-size:14.5px;color:#dadada;letter-spacing:-0.035px;">[Custom View]</span>
<span class="t" style="left:119.90px;top:181.73px;font-size:14.5px;color:#dadada;letter-spacing:0.077px;">[2D Wireframe]</span>
<span class="t" style="left:30.50px;top:959.30px;font-size:15px;color:#ffffff;font-weight:700;letter-spacing:-0.011px;">Model</span>
<span class="t" style="left:104.60px;top:959.30px;font-size:15px;color:#e4e4e4;letter-spacing:-0.432px;">Layout3</span>
<span class="t" style="left:545.10px;top:920.80px;font-size:14px;color:#5f646e;font-style:italic;font-family:'Liberation Mono',monospace;letter-spacing:0.567px;">Type a command</span>
<span class="t" style="left:1183.40px;top:996.10px;font-size:15px;color:#f2f2f2;transform-origin:0 0;transform:scaleX(0.9448);">MODEL</span>
<span class="t" style="left:1665.70px;top:996.00px;font-size:15px;color:#f2f2f2;transform-origin:0 0;transform:scaleX(0.7670);">1:1</span>
<span class="t" style="left:1794.00px;top:392.29px;font-size:11px;color:#596071;font-family:'DejaVu Sans','Liberation Sans',sans-serif;letter-spacing:0.183px;z-index:5;">Unnamed</span>
</body></html>
